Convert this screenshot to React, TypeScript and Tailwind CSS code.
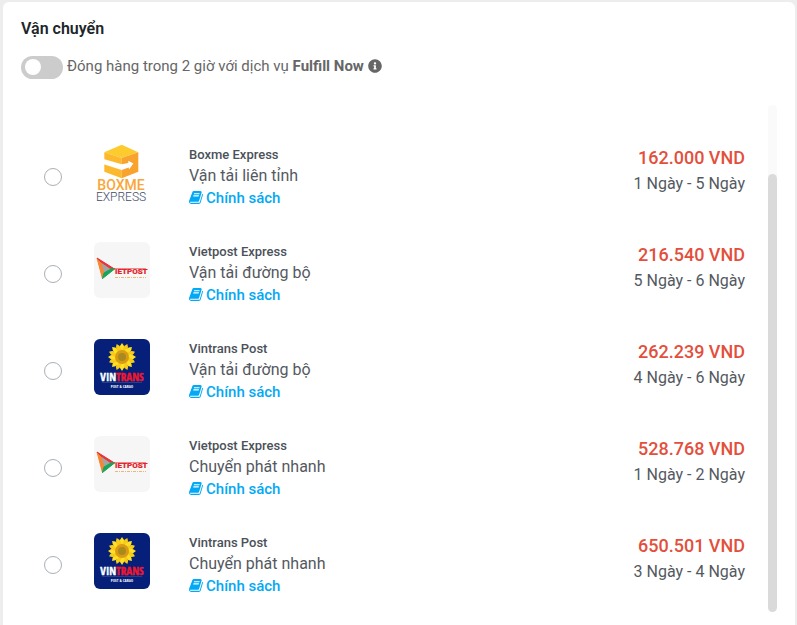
import React, { useState } from 'react';
import { FaInfoCircle } from 'react-icons/fa';

type Carrier = 'boxme' | 'vietpost' | 'vintrans';

interface ShippingOption {
  id: number;
  carrier: Carrier;
  name: string;
  service: string;
  price: string;
  duration: string;
}

const OPTIONS: ShippingOption[] = [
  { id: 1, carrier: 'boxme', name: 'Boxme Express', service: 'Vận tải liên tỉnh', price: '162.000 VND', duration: '1 Ngày - 5 Ngày' },
  { id: 2, carrier: 'vietpost', name: 'Vietpost Express', service: 'Vận tải đường bộ', price: '216.540 VND', duration: '5 Ngày - 6 Ngày' },
  { id: 3, carrier: 'vintrans', name: 'Vintrans Post', service: 'Vận tải đường bộ', price: '262.239 VND', duration: '4 Ngày - 6 Ngày' },
  { id: 4, carrier: 'vietpost', name: 'Vietpost Express', service: 'Chuyển phát nhanh', price: '528.768 VND', duration: '1 Ngày - 2 Ngày' },
  { id: 5, carrier: 'vintrans', name: 'Vintrans Post', service: 'Chuyển phát nhanh', price: '650.501 VND', duration: '3 Ngày - 4 Ngày' },
];

const BookIcon: React.FC = () => (
  <svg viewBox="0 0 1664 1792" className="h-[15px] w-[14px] shrink-0" fill="currentColor" aria-hidden="true">
    <path d="M1639 478q40 57 18 129l-275 906q-19 64-76.5 107.5t-122.5 43.5h-923q-77 0-148.5-53.5t-99.5-131.5q-24-67-2-127 0-4 3-27t4-37q1-8-3-21.5t-3-19.5q2-11 8-21t16.5-23.5 16.5-23.5q23-38 45-91.5t30-91.5q3-10 .5-30t-.5-28q3-11 17-28t17-23q21-36 42-92t25-90q1-9-2.5-32t.5-28q4-13 22-30.5t22-22.5q19-26 42.5-84.5t27.5-96.5q1-8-3-25.5t-2-26.5q2-8 9-18t18-23 17-21q8-12 16.5-30.5t15-35 16-36 19.5-32 26.5-23.5 36-11.5 47.5 5.5l-1 3q38-9 51-9h761q74 0 114 56t18 130l-274 906q-36 119-71.5 153.5t-128.5 34.5h-869q-27 0-38 15-11 16-1 43 24 70 144 70h923q29 0 56-15.5t35-41.5l300-987q7-22 5-57 38 15 59 43zm-1064 2q-4 13 2 22.5t20 9.5h608q13 0 25.5-9.5t16.5-22.5l21-64q4-13-2-22.5t-20-9.5h-608q-13 0-25.5 9.5t-16.5 22.5zm-83 256q-4 13 2 22.5t20 9.5h608q13 0 25.5-9.5t16.5-22.5l21-64q4-13-2-22.5t-20-9.5h-608q-13 0-25.5 9.5t-16.5 22.5z" />
  </svg>
);

const BoxmeLogo: React.FC = () => (
  <svg viewBox="0 0 56 60" className="h-[60px] w-14" aria-hidden="true">
    <path d="M27.700 1.700 44.300 9.300 27.700 15 10.300 9.300Z" fill="#fdcb2e" />
    <path d="M10.300 9.300 27.700 15v20.300L10.300 28.700Z" fill="#fdb92e" />
    <path d="M27.700 15 44.300 9.300v19.400L27.700 35.300Z" fill="#f9a32f" />
    <path d="M9.500 16 27.700 21.300 34.300 20v-2.300l5 2.700-4.300 6-.3-2L27.700 27 9.500 21.300Z" fill="#fff" />
    <text textAnchor="middle" fontFamily="Roboto, sans-serif">
      <tspan x="27" y="47" fontSize="14" fontWeight="500" fill="#f9a63a">BOXME</tspan>
      <tspan x="27" y="58" fontSize="12" fontWeight="300" fill="#3f4d68">EXPRESS</tspan>
    </text>
  </svg>
);

const VietpostLogo: React.FC = () => (
  <svg viewBox="0 0 56 56" className="h-14 w-14 rounded-md" aria-hidden="true">
    <rect width="56" height="56" fill="#f6f6f6" />
    <path d="M3 16 20.500 27 8.500 36.500Z" fill="#a3a3a3" />
    <path d="M3 16 8.500 36.500 9.500 30 7 20.500Z" fill="#f58634" stroke="#f58634" />
    <path d="M3 16 20.500 27 16.500 26.500 7 20Z" fill="#e9343b" stroke="#e9343b" />
    <path d="M20.500 27 8.500 36.500 10 31 17 27Z" fill="#16a65a" stroke="#16a65a" />
    <path d="M20 26.500H52" stroke="#e32128" strokeWidth="0.500" />
    <text x="21" y="32" fontSize="8" fontWeight="800" fontFamily="Roboto, sans-serif" fill="#e32128" stroke="#e32128" strokeWidth="0.200">IETPOST</text>
    <path d="M21 35.500H52" stroke="#f2b27a" strokeWidth="1" strokeDasharray="3 1 1 1" />
  </svg>
);

const PETALS = Array.from({ length: 16 }, (_, i) => i * 22.5);

const VintransLogo: React.FC = () => (
  <svg viewBox="0 0 56 56" className="h-14 w-14 rounded-md" aria-hidden="true">
    <rect width="56" height="56" fill="#061f78" />
    {PETALS.map((angle) => (
      <path key={angle} d="M28 18Q23 9 28 4Q33 9 28 18Z" fill={angle % 45 === 0 ? '#ffe022' : '#f8cb1a'} transform={`rotate(${angle} 28 18)`} />
    ))}
    <circle cx="28" cy="18" r="7" fill="#d99a16" />
    <circle cx="28" cy="18" r="4" fill="#a98a1c" />
    <text x="28" y="42" textAnchor="middle" fontSize="11" fontWeight="900" fontFamily="'Open Sans Condensed', 'Roboto Condensed', Roboto, sans-serif" fill="#fff" stroke="#fff" strokeWidth="0.400">
      VIN<tspan fill="#f0182e" stroke="#f0182e">TRANS</tspan>
    </text>
    <path d="M8 43.500H48" stroke="#4a5c9c" strokeWidth="0.500" />
    <text x="28" y="49" textAnchor="middle" fontSize="4" fontWeight="700" fontFamily="'Open Sans Condensed', 'Roboto Condensed', Roboto, sans-serif" fill="#fff">POST &amp; CARGO</text>
  </svg>
);

const CarrierLogo: React.FC<{ carrier: Carrier }> = ({ carrier }) => {
  if (carrier === 'boxme') return <BoxmeLogo />;
  if (carrier === 'vietpost') return <VietpostLogo />;
  return <VintransLogo />;
};

interface OptionRowProps {
  option: ShippingOption;
  checked: boolean;
  onSelect: () => void;
}

const OptionRow: React.FC<OptionRowProps> = ({ option, checked, onSelect }) => (
  <li className="flex h-[97px] items-center">
    <input
      id={`option-${option.id}`}
      type="radio"
      name="shipping"
      checked={checked}
      onChange={onSelect}
      className="h-[18px] w-[18px] shrink-0 cursor-pointer appearance-none rounded-full border border-[#a9b0b7] bg-white checked:border-[5px] checked:border-[#03a9f4]"
    />
    <label htmlFor={`option-${option.id}`} className="ml-8 flex w-14 shrink-0 cursor-pointer pb-2">
      <CarrierLogo carrier={option.carrier} />
    </label>
    <div className="ml-[39px] min-w-0 flex-1">
      <h3 className="text-[13px] leading-[18px] font-medium text-[#4b5159]">{option.name}</h3>
      <p className="text-base leading-6 text-[#54595f]">{option.service}</p>
      <a href="#policy" className="flex w-fit items-center gap-[3px] text-[15px] leading-5 font-medium text-[#03a9f4]">
        <BookIcon />
        Chính sách
      </a>
    </div>
    <div className="shrink-0 pb-3 text-right">
      <p className="text-lg leading-[26px] font-medium text-[#e34f3c]">{option.price}</p>
      <p className="text-base leading-[26px] text-[#54595f]">{option.duration}</p>
    </div>
  </li>
);

export default function App() {
  const [fulfillNow, setFulfillNow] = useState(false);
  const [selectedId, setSelectedId] = useState<number | null>(null);

  return (
    <div className="flex min-h-screen flex-col bg-[#ededed] pt-0.5 pr-0.5 pl-[3px] font-['Roboto',sans-serif]">
      <main className="flex-1 rounded-t-md bg-white px-[18px] pt-[15px]">
        <h2 className="text-base leading-6 font-semibold text-[#212529]">Vận chuyển</h2>

        {/* Fulfill Now switch */}
        <div className="mt-[13px] flex h-6 items-center">
          <input
            id="fulfill-now"
            type="checkbox"
            role="switch"
            checked={fulfillNow}
            onChange={(e) => setFulfillNow(e.target.checked)}
            className="mt-[2px] flex h-[23px] w-[42px] shrink-0 cursor-pointer appearance-none items-center rounded-full bg-[#ccc] px-1 before:h-4 before:w-4 before:rounded-full before:bg-white checked:justify-end checked:bg-[#03a9f4]"
          />
          <label htmlFor="fulfill-now" className="ml-1 text-[15px] leading-6 text-[#666]">
            Đóng hàng trong 2 giờ với dịch vụ <strong className="font-bold">Fulfill Now</strong>
          </label>
          <FaInfoCircle className="ml-1 h-[14px] w-[14px] text-[#666]" />
        </div>

        {/* Carriers */}
        <div className="mt-[27px] flex">
          <ul className="flex-1 px-[23px] pt-[23px]">
            {OPTIONS.map((option) => (
              <OptionRow
                key={option.id}
                option={option}
                checked={selectedId === option.id}
                onSelect={() => setSelectedId(option.id)}
              />
            ))}
          </ul>
          <div className="mb-px flex w-[9px] flex-col justify-end rounded-full bg-[#fafafa]">
            <div className="h-[438px] rounded-full bg-[#dadada]" />
          </div>
        </div>
      </main>
    </div>
  );
}
